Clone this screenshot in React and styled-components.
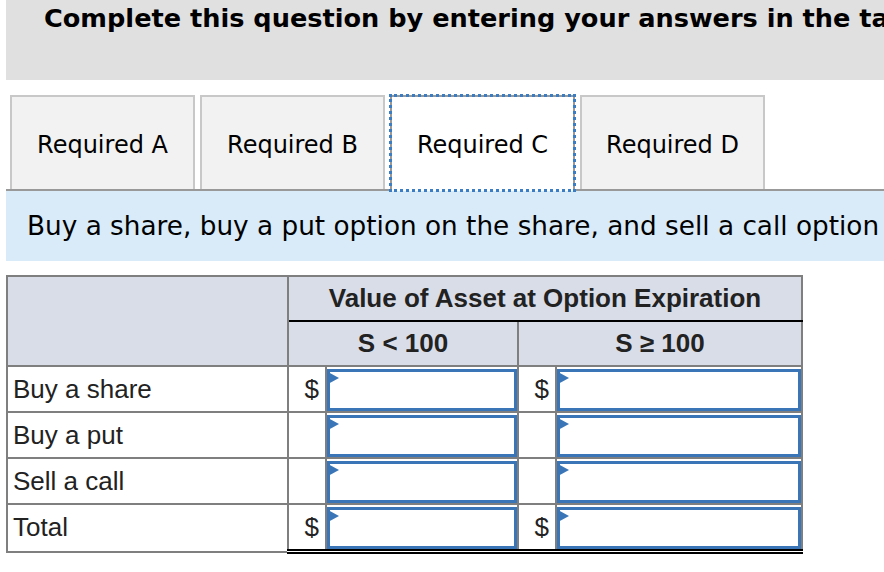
import { createGlobalStyle, styled } from "styled-components";

const GlobalStyle = createGlobalStyle`
  body {
    margin: 0;
    background: #ffffff;
    font-family: "DejaVu Sans", Verdana, sans-serif;
    color: #000000;
  }
`;

const Page = styled.div`
  width: 884px;
  padding-left: 6px;
  box-sizing: border-box;
  overflow: hidden;
`;

const Banner = styled.div`
  height: 80px;
  background: #e0e0e0;
  padding: 3px 0 0 38px;
  box-sizing: border-box;
  white-space: nowrap;
  overflow: hidden;
  h1 {
    margin: 0;
    font-size: 25.6px;
    font-weight: bold;
    line-height: 30px;
  }
`;

const TabRow = styled.div`
  display: flex;
  align-items: flex-start;
  gap: 5px;
  margin-top: 15px;
  padding-left: 4px;
  border-bottom: 2px solid #999999;
  height: 94px;
`;

const Tab = styled.button`
  width: 185px;
  height: ${(p) => (p.$active ? "96px" : "94px")};
  margin: 0;
  font-family: "DejaVu Sans", Verdana, sans-serif;
  font-size: 24px;
  color: #000000;
  background: ${(p) => (p.$active ? "#ffffff" : "#f2f2f2")};
  border: 2px solid ${(p) => (p.$active ? "#999999" : "#c8c8c8")};
  border-bottom: 0;
  outline: ${(p) => (p.$active ? "3px dotted #3b7dc4" : "none")};
  outline-offset: -2px;
  position: relative;
  z-index: ${(p) => (p.$active ? 1 : 0)};
  padding: ${(p) => (p.$active ? "4px 0 2px" : "4px 0 0")};
  cursor: pointer;
`;

const Instruction = styled.div`
  height: 70px;
  background: #d9ebf9;
  display: flex;
  align-items: center;
  padding-left: 21px;
  white-space: nowrap;
  overflow: hidden;
  font-size: 26.3px;
`;

const Grid = styled.table`
  margin-top: 14px;
  width: 795px;
  border-collapse: collapse;
  border: 2px solid #7f7f7f;
  font-family: "Liberation Sans", Arial, sans-serif;
  table-layout: fixed;
  color: #222222;
`;

const HeadCell = styled.th`
  background: #d9dde8;
  height: 43px;
  padding: 0;
  font-size: 26px;
  font-weight: bold;
  text-align: center;
  border-left: 2px solid #7f7f7f;
  border-right: 2px solid #7f7f7f;
  border-bottom: 2px solid ${(p) => (p.$rule ? "#000000" : "#7f7f7f")};
`;

const Row = styled.tr`
  td {
    height: 43px;
    border: 2px solid #7f7f7f;
    border-top-color: ${(p) => (p.$total ? "#000000" : "#7f7f7f")};
  }
`;

const Label = styled.td`
  font-size: 26px;
  padding: 0 0 0 5px;
  border-bottom-color: #7f7f7f !important;
`;

const Dollar = styled.td`
  font-size: 26px;
  text-align: right;
  padding: 0 6px 0 0;
  border-bottom: ${(p) => (p.$total ? "5px double #000000" : "2px solid #7f7f7f")} !important;
`;

const InputCell = styled.td`
  padding: 1px 0 0 0;
  border-bottom: ${(p) => (p.$total ? "5px double #000000" : "2px solid #7f7f7f")} !important;
`;

const Field = styled.div`
  position: relative;
  height: 42px;
  box-sizing: border-box;
  border: 3px solid #3a76b7;
  background: #ffffff;
  &::before {
    content: "";
    position: absolute;
    left: -2px;
    top: 0;
    border-left: 11px solid #3a76b7;
    border-top: 6px solid transparent;
    border-bottom: 6px solid transparent;
  }
`;

const rows = [
  { label: "Buy a share", dollar: true },
  { label: "Buy a put", dollar: false },
  { label: "Sell a call", dollar: false },
  { label: "Total", dollar: true, total: true },
];

const App = () => {
  return (
    <Page>
      <GlobalStyle />
      <Banner>
        <h1>Complete this question by entering your answers in the tabs below.</h1>
      </Banner>
      <TabRow>
        <Tab>Required A</Tab>
        <Tab>Required B</Tab>
        <Tab $active>Required C</Tab>
        <Tab>Required D</Tab>
      </TabRow>
      <Instruction>
        Buy a share, buy a put option on the share, and sell a call option on the share.
      </Instruction>
      <Grid>
        <colgroup>
          <col style={{ width: "281px" }} />
          <col style={{ width: "38px" }} />
          <col style={{ width: "192px" }} />
          <col style={{ width: "38px" }} />
          <col style={{ width: "246px" }} />
        </colgroup>
        <thead>
          <tr>
            <HeadCell rowSpan={2} />
            <HeadCell colSpan={4} $rule>
              Value of Asset at Option Expiration
            </HeadCell>
          </tr>
          <tr>
            <HeadCell colSpan={2}>S &lt; 100</HeadCell>
            <HeadCell colSpan={2}>S ≥ 100</HeadCell>
          </tr>
        </thead>
        <tbody>
          {rows.map((r) => (
            <Row key={r.label} $total={r.total}>
              <Label>{r.label}</Label>
              <Dollar $total={r.total}>{r.dollar ? "$" : ""}</Dollar>
              <InputCell $total={r.total}>
                <Field />
              </InputCell>
              <Dollar $total={r.total}>{r.dollar ? "$" : ""}</Dollar>
              <InputCell $total={r.total}>
                <Field />
              </InputCell>
            </Row>
          ))}
        </tbody>
      </Grid>
    </Page>
  );
};

export default App;
